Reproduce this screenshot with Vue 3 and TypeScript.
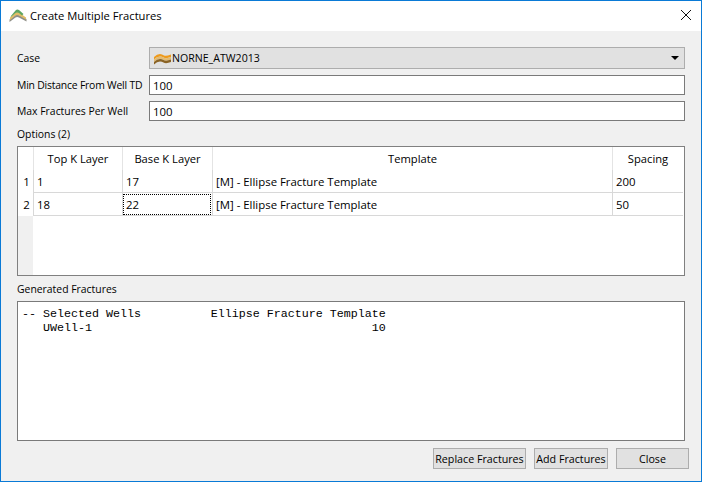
<script setup lang="ts">
type FractureRow = {
  top: string
  base: string
  template: string
  spacing: string
}

const rows: FractureRow[] = [
  { top: '1', base: '17', template: '[M] - Ellipse Fracture Template', spacing: '200' },
  { top: '18', base: '22', template: '[M] - Ellipse Fracture Template', spacing: '50' },
]

const output = `-- Selected Wells          Ellipse Fracture Template
   UWell-1                                        10`
</script>

<template>
  <div class="window">
    <header class="titlebar">
      <svg class="app-icon" width="18" height="13" viewBox="0 0 18 13">
        <path d="M0.5 10.5 L6.5 6 Q8 5 10 6 L17.5 10 V12.5 L10 8.5 Q8 7.5 6.5 8.5 L0.5 13 Z" fill="#8f8f88" />
        <path d="M1 8.5 L6.5 3.5 Q8 2.5 10 3.5 L17 8.5 V10.5 L10 6.5 Q8 5.5 6.5 6.5 L1 11 Z" fill="#e0bd66" />
        <path d="M1.5 7.5 L6.5 1.5 Q8 0 10 1 L14.5 5 L13 6.5 L10 4 Q8 3 6.5 4 L2.5 7.5 Z" fill="#5fa561" />
      </svg>
      <span class="title">Create Multiple Fractures</span>
      <svg class="close-x" width="12" height="12" viewBox="0 0 12 12">
        <path d="M1 1 L11 11 M11 1 L1 11" stroke="#111" stroke-width="1" fill="none" />
      </svg>
    </header>

    <main class="body">
      <div class="form">
        <label class="lbl">Case</label>
        <div class="combo">
          <svg width="17" height="13" viewBox="0 0 17 13">
            <path d="M0 5 Q3 2 6 2 Q8 2 10 3.5 Q12 4.5 17 2.5 V5 Q12 7 9.5 5.5 Q8 4.5 6 4.5 Q3 4.5 0 7.5 Z" fill="#ee9a1c" />
            <path d="M0 7.5 Q3 4.5 6 4.5 Q8 4.5 9.5 5.5 Q12 7 17 5 V7.5 Q12 9.5 9.5 8 Q8 7 6 7 Q3 7 0 10 Z" fill="#e3bb72" />
            <path d="M0 10 Q3 7 6 7 Q8 7 9.5 8 Q12 9.5 17 7.5 V10 Q12 12 9.5 10.5 Q8 9.5 6 9.5 Q3 9.5 0 12.5 Z" fill="#8a6324" />
          </svg>
          <span class="combo-text">NORNE_ATW2013</span>
          <span class="arrow"></span>
        </div>
        <label class="lbl tight">Min Distance From Well TD</label>
        <input class="field" type="text" value="100" />
        <label class="lbl">Max Fractures Per Well</label>
        <input class="field" type="text" value="100" />
      </div>

      <div class="group-label options-label">Options (2)</div>
      <div class="table">
        <div class="corner"></div>
        <div class="th">Top K Layer</div>
        <div class="th">Base K Layer</div>
        <div class="th">Template</div>
        <div class="th">Spacing</div>
        <template v-for="(row, i) in rows" :key="i">
          <div class="row-head">{{ i + 1 }}</div>
          <div class="td">{{ row.top }}</div>
          <div class="td" :class="{ focused: i === 1 }">{{ row.base }}</div>
          <div class="td">{{ row.template }}</div>
          <div class="td">{{ row.spacing }}</div>
        </template>
        <div class="row-fill"></div>
        <div class="empty"></div>
      </div>

      <div class="group-label generated-label">Generated Fractures</div>
      <pre class="output">{{ output }}</pre>

      <div class="buttons">
        <button class="btn replace">Replace Fractures</button>
        <button class="btn add">Add Fractures</button>
        <button class="btn close">Close</button>
      </div>
    </main>
  </div>
</template>

<style scoped>
.window {
  width: 702px;
  height: 482px;
  box-sizing: border-box;
  border: 1px solid #0a7ad6;
  background: #f0f0f0;
  display: flex;
  flex-direction: column;
  font-family: "Open Sans", "Noto Sans", sans-serif;
  font-size: 11.4px;
  color: #000;
}

.titlebar {
  box-sizing: border-box;
  height: 30px;
  flex: none;
  background: #fff;
  display: flex;
  align-items: center;
  padding: 0 9px 2px 8px;
}

.app-icon {
  margin-top: 1px;
}

.title {
  flex: 1;
  font-size: 11.2px;
  padding-left: 3px;
}

.body {
  flex: 1;
  display: flex;
  flex-direction: column;
  padding: 16px 16px 0 16px;
  min-height: 0;
}

.form {
  display: grid;
  grid-template-columns: 132px 536px;
  grid-template-rows: 22px 20px 20px;
  row-gap: 6px;
}

.lbl {
  align-self: center;
  white-space: nowrap;
  font-size: 10.4px;
}

.tight {
  letter-spacing: -0.2px;
}

.combo {
  box-sizing: border-box;
  background: #e1e1e1;
  border: 1px solid #adadad;
  display: flex;
  align-items: center;
  padding: 0 5px 0 4px;
  font-size: 10.6px;
}

.combo-text {
  flex: 1;
  padding-left: 1px;
}

.arrow {
  width: 0;
  height: 0;
  border-left: 4px solid transparent;
  border-right: 4px solid transparent;
  border-top: 4px solid #000;
}

.field {
  box-sizing: border-box;
  width: 100%;
  height: 20px;
  background: #fff;
  border: 1px solid #7a7a7a;
  padding: 1px 3px 0;
  margin: 0;
  font: inherit;
  color: #000;
  outline: none;
}

.group-label {
  line-height: 16px;
  font-size: 10.4px;
}

.options-label {
  margin-top: 5px;
}

.generated-label {
  margin-top: 5px;
}

.table {
  box-sizing: border-box;
  margin-top: 4px;
  width: 668px;
  height: 130px;
  background: #fff;
  border: 1px solid #808080;
  padding-right: 1px;
  display: grid;
  grid-template-columns: 15px 89px 90px 400px 71px;
  grid-template-rows: 23px 23px 23px 1fr;
}

.corner {
  background: #fff;
}

.th {
  background: #fff;
  border-left: 1px solid #e4e4e4;
  text-align: center;
  line-height: 23px;
  font-size: 11.2px;
}

.row-head {
  background: #fff;
  text-align: center;
  line-height: 23px;
  padding-left: 2px;
}

.td {
  box-sizing: border-box;
  border-left: 1px solid #d8d8d8;
  border-bottom: 1px solid #d8d8d8;
  padding-left: 3px;
  line-height: 23px;
}

.focused {
  outline: 1px dotted #000;
  outline-offset: -2px;
}

.row-fill {
  background: #f0f0f0;
}

.empty {
  grid-column: 2 / 6;
  background: #fff;
}

.output {
  box-sizing: border-box;
  margin: 4px 0 0;
  width: 668px;
  height: 140px;
  background: #fff;
  border: 1px solid #7a7a7a;
  padding: 5px 4px;
  font-family: "Liberation Mono", monospace;
  font-size: 11.67px;
  line-height: 14px;
}

.buttons {
  display: flex;
  justify-content: flex-end;
  gap: 8px;
  margin-top: 7px;
  margin-right: -4px;
}

.btn {
  box-sizing: border-box;
  height: 21px;
  background: #e1e1e1;
  border: 1px solid #adadad;
  padding: 0;
  font: inherit;
  font-size: 10.7px;
  color: #000;
  white-space: nowrap;
}

.replace {
  width: 93px;
}

.add {
  width: 74px;
}

.close {
  width: 73px;
}
</style>

<style>
html,
body {
  margin: 0;
  overflow: hidden;
}
</style>
